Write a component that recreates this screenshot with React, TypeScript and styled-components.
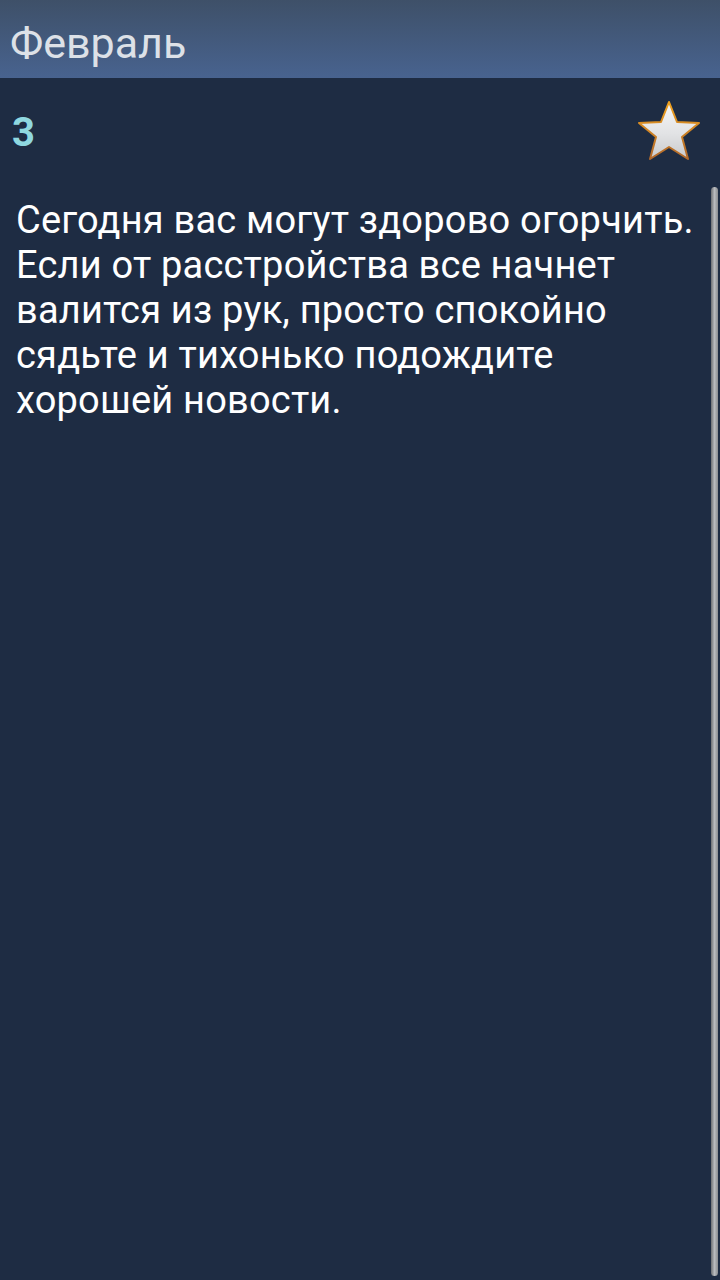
import React from "react";
import styled, { createGlobalStyle } from "styled-components";

const Global = createGlobalStyle`
  html, body { margin: 0; padding: 0; background: #1e2c43; }
  body { font-family: Roboto, "Noto Sans", sans-serif; }
`;

const Screen = styled.div`
  width: 720px;
  height: 1280px;
  background: #1e2c43;
  display: flex;
  flex-direction: column;
  overflow: hidden;
  position: relative;
`;

const Header = styled.div`
  height: 78px;
  background: linear-gradient(#3e5068, #48638f);
  display: flex;
  align-items: center;
  padding-left: 10px;
  font-size: 43px;
  color: #dde1e7;
  box-sizing: border-box;
  padding-top: 8px;
`;

const TopRow = styled.div`
  display: flex;
  justify-content: space-between;
  align-items: center;
  padding: 12px 18px 0 12px;
  height: 94px;
  box-sizing: border-box;
`;

const Day = styled.div`
  font-size: 40px;
  font-weight: 700;
  color: #8fd8e0;
  margin-top: 2px;
`;

const Body = styled.div`
  flex: 1;
  display: flex;
  position: relative;
  padding: 26px 0 0 16px;
`;

const Text = styled.p`
  margin: 0;
  font-size: 38px;
  line-height: 45px;
  letter-spacing: 0.2px;
  color: #ffffff;
  width: 694px;
`;

const Scrollbar = styled.div`
  position: absolute;
  right: 2px;
  top: 15px;
  bottom: 4px;
  width: 7px;
  border-radius: 4px;
  background: linear-gradient(90deg, #6d6f72, #b9bbbe 50%, #8a8c8f);
`;

const Star = () => (
  <svg width="66" height="64" viewBox="0 0 66 64">
    <defs>
      <linearGradient id="sf" x1="0" y1="0" x2="0" y2="1">
        <stop offset="0" stopColor="#f7f7f7" />
        <stop offset="0.55" stopColor="#e2e3e5" />
        <stop offset="1" stopColor="#c9cacc" />
      </linearGradient>
      <linearGradient id="ss" x1="0" y1="0" x2="0" y2="1">
        <stop offset="0" stopColor="#f0a21e" />
        <stop offset="1" stopColor="#b0672a" />
      </linearGradient>
    </defs>
    <path
      d="M33 3 L41 23 L63 24 L46 38 L52 60 L33 48 L14 60 L20 38 L3 24 L25 23 Z"
      fill="url(#sf)"
      stroke="url(#ss)"
      strokeWidth="2"
      strokeLinejoin="round"
    />
  </svg>
);

export default function App() {
  return (
    <Screen>
      <Global />
      <Header>Февраль</Header>
      <TopRow>
        <Day>3</Day>
        <Star />
      </TopRow>
      <Body>
        <Text>
          Сегодня вас могут здорово огорчить. Если от расстройства все начнет
          валится из рук, просто спокойно сядьте и тихонько подождите хорошей
          новости.
        </Text>
        <Scrollbar />
      </Body>
    </Screen>
  );
}
